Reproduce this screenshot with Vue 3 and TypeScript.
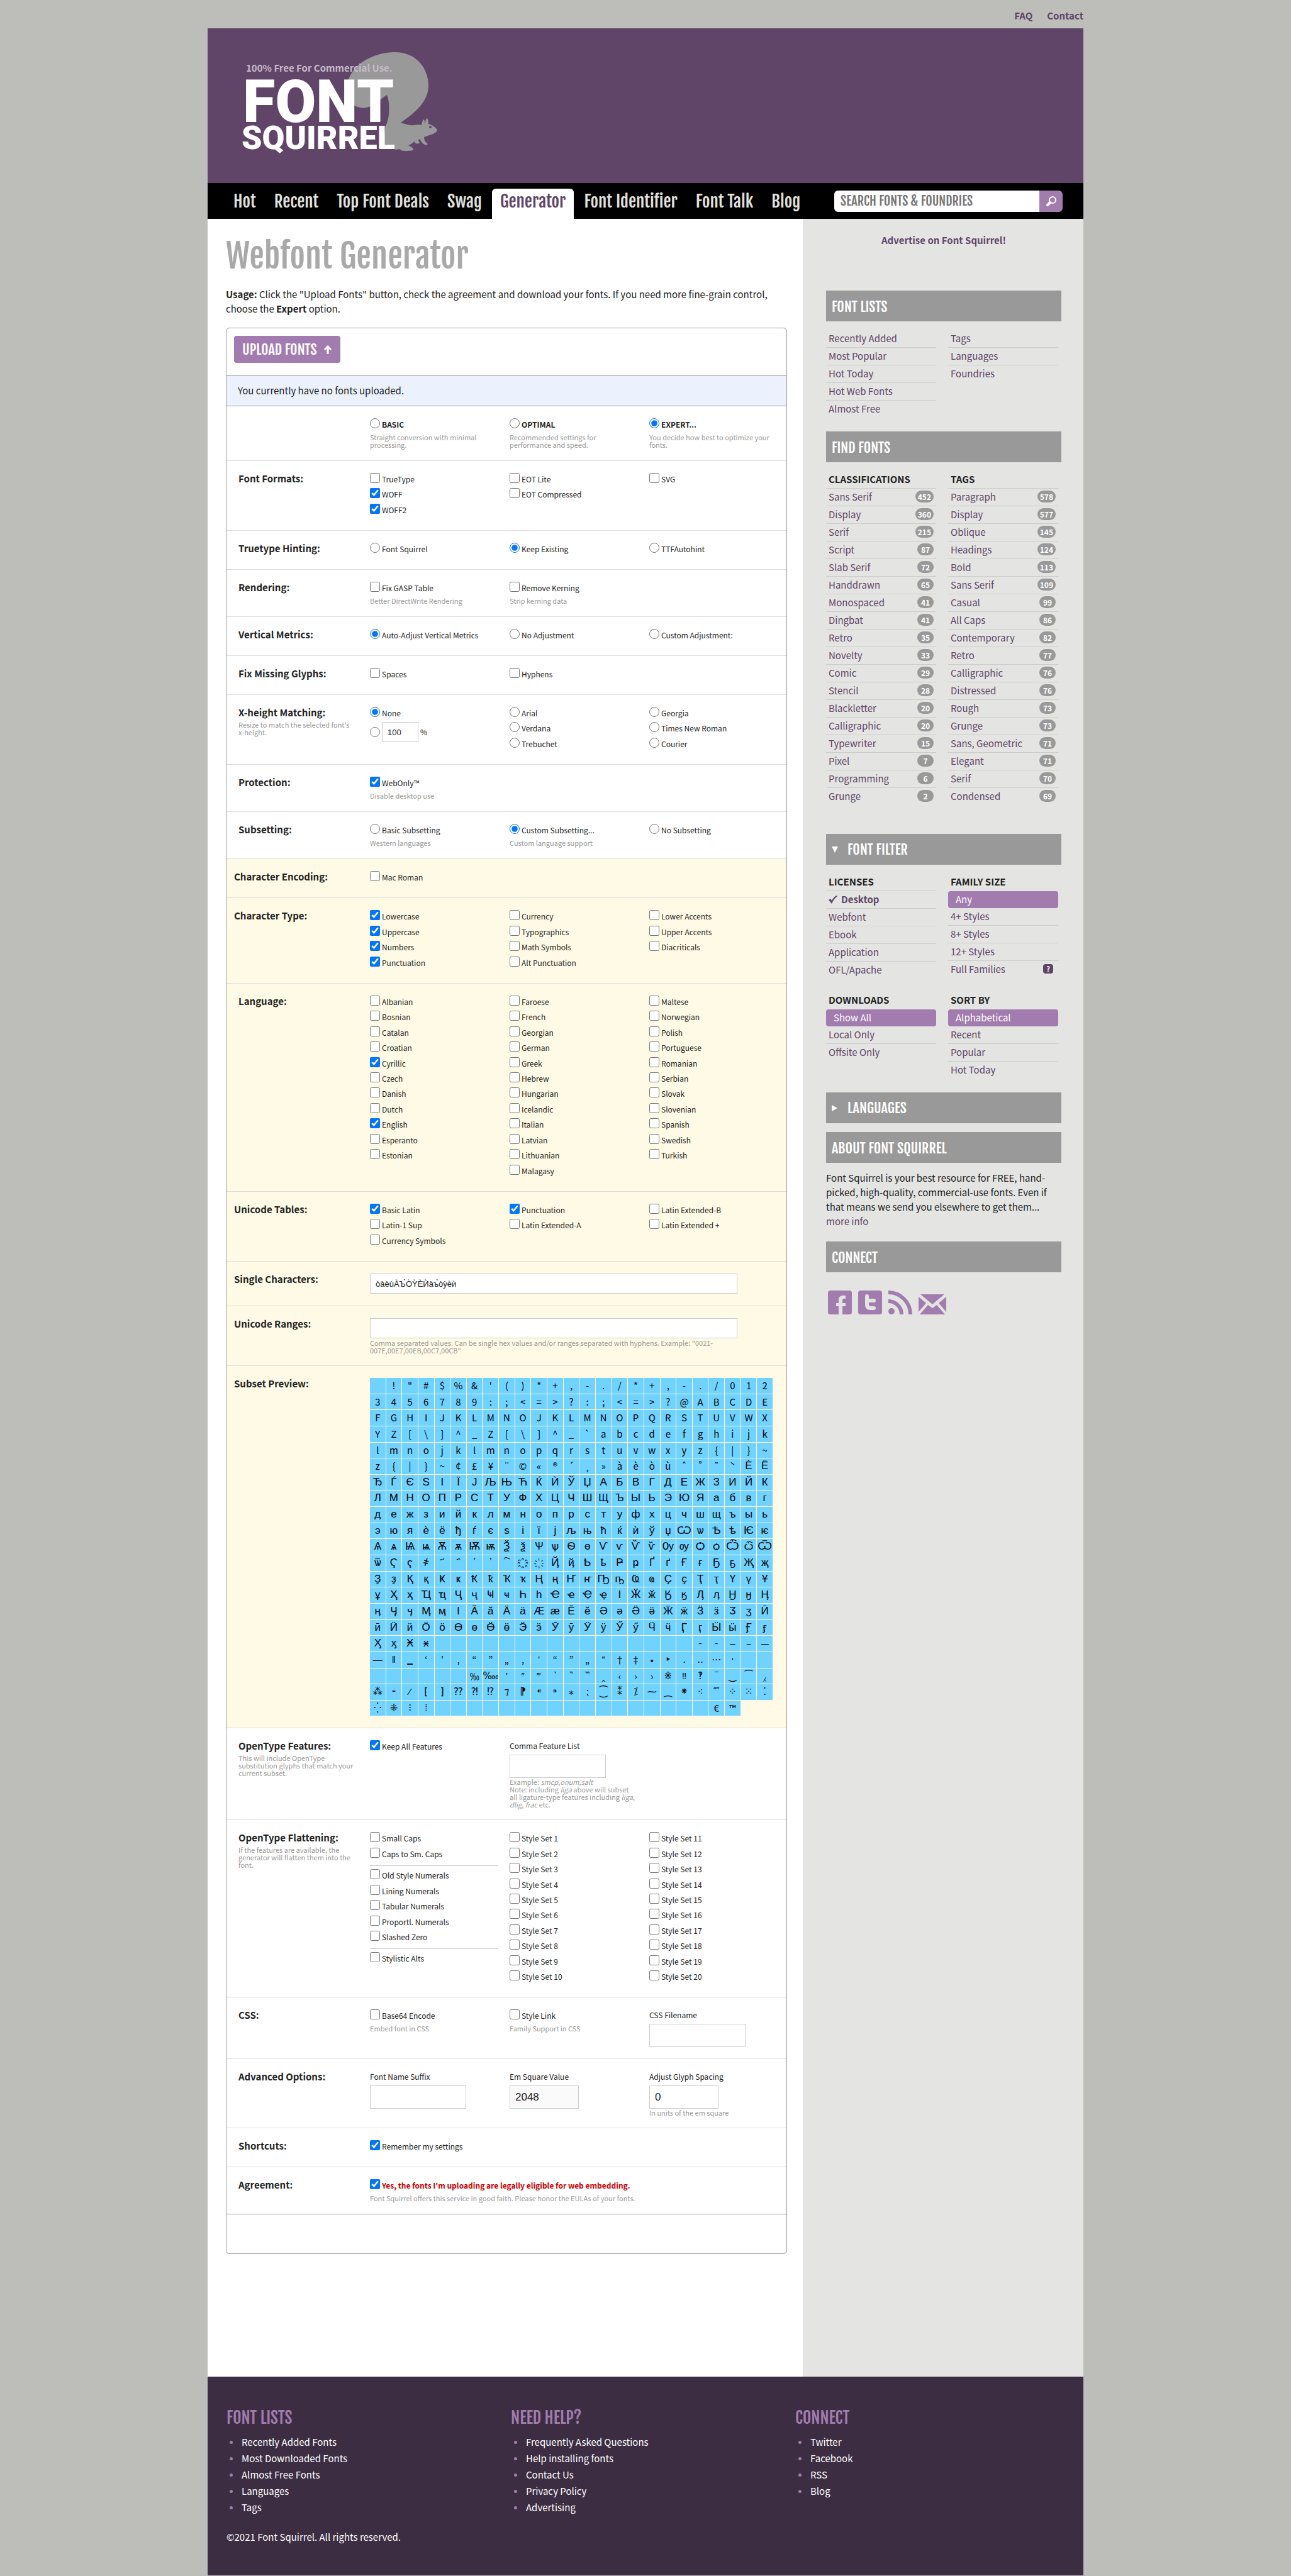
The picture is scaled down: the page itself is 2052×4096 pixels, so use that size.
<script setup lang="ts">
interface Option {
  label: string
  kind?: 'radio' | 'checkbox'
  checked?: boolean
  hint?: string
}
interface Section {
  title?: string
  group?: string
  subset?: boolean
  indent?: boolean
  columns: Option[][]
}

const ROW_PITCH = 24.43

const radio = (label: string, checked = false, hint?: string): Option => ({ label, kind: 'radio', checked, hint })
const box = (label: string, checked = false, hint?: string): Option => ({ label, kind: 'checkbox', checked, hint })
const boxes = (labels: string, checked: string[] = []): Option[] =>
  labels.split(',').map((l) => box(l, checked.includes(l)))

const modes: Option[] = [
  radio('BASIC', false, 'Straight conversion with minimal processing.'),
  radio('OPTIMAL', false, 'Recommended settings for performance and speed.'),
  radio('EXPERT...', true, 'You decide how best to optimize your fonts.'),
]

const firstSections: Section[] = [
  {
    title: 'Font Formats:',
    columns: [boxes('TrueType,WOFF,WOFF2', ['WOFF', 'WOFF2']), boxes('EOT Lite,EOT Compressed'), boxes('SVG')],
  },
  {
    title: 'Truetype Hinting:',
    group: 'hinting',
    columns: [[radio('Font Squirrel')], [radio('Keep Existing', true)], [radio('TTFAutohint')]],
  },
  {
    title: 'Rendering:',
    columns: [
      [box('Fix GASP Table', false, 'Better DirectWrite Rendering')],
      [box('Remove Kerning', false, 'Strip kerning data')],
      [],
    ],
  },
  {
    title: 'Vertical Metrics:',
    group: 'metrics',
    columns: [[radio('Auto-Adjust Vertical Metrics', true)], [radio('No Adjustment')], [radio('Custom Adjustment:')]],
  },
  { title: 'Fix Missing Glyphs:', columns: [[box('Spaces')], [box('Hyphens')], []] },
]

const secondSections: Section[] = [
  { title: 'Protection:', columns: [[box('WebOnly™', true, 'Disable desktop use')], [], []] },
  {
    title: 'Subsetting:',
    group: 'subsetting',
    columns: [
      [radio('Basic Subsetting', false, 'Western languages')],
      [radio('Custom Subsetting...', true, 'Custom language support')],
      [radio('No Subsetting')],
    ],
  },
  { title: 'Character Encoding:', subset: true, columns: [[box('Mac Roman')], [], []] },
  {
    title: 'Character Type:',
    subset: true,
    columns: [
      boxes('Lowercase,Uppercase,Numbers,Punctuation', ['Lowercase', 'Uppercase', 'Numbers', 'Punctuation']),
      boxes('Currency,Typographics,Math Symbols,Alt Punctuation'),
      boxes('Lower Accents,Upper Accents,Diacriticals'),
    ],
  },
  {
    title: 'Language:',
    subset: true,
    indent: true,
    columns: [
      boxes('Albanian,Bosnian,Catalan,Croatian,Cyrillic,Czech,Danish,Dutch,English,Esperanto,Estonian', [
        'Cyrillic',
        'English',
      ]),
      boxes('Faroese,French,Georgian,German,Greek,Hebrew,Hungarian,Icelandic,Italian,Latvian,Lithuanian,Malagasy'),
      boxes('Maltese,Norwegian,Polish,Portuguese,Romanian,Serbian,Slovak,Slovenian,Spanish,Swedish,Turkish'),
    ],
  },
  {
    title: 'Unicode Tables:',
    subset: true,
    columns: [
      boxes('Basic Latin,Latin-1 Sup,Currency Symbols', ['Basic Latin']),
      boxes('Punctuation,Latin Extended-A', ['Punctuation']),
      boxes('Latin Extended-B,Latin Extended +'),
    ],
  },
]

const flattenA = boxes('Small Caps,Caps to Sm. Caps')
const flattenB = boxes('Old Style Numerals,Lining Numerals,Tabular Numerals,Proportl. Numerals,Slashed Zero')
const flattenC = boxes('Stylistic Alts')
const styleSets: Option[][] = [0, 10].map((start) =>
  Array.from({ length: 10 }, (_, i) => box(`Style Set ${start + i + 1}`)),
)

function gridStyle(rows: number) {
  return { gridTemplateRows: `repeat(${rows}, 1fr)`, height: `${Math.round(rows * ROW_PITCH)}px` }
}
function hasHint(column: Option[]): boolean {
  return column.some((o) => o.hint)
}
function rowsOf(s: Section): number {
  return Math.max(...s.columns.map((c) => c.length))
}

const range = (from: number, to: number): string[] =>
  Array.from({ length: to - from + 1 }, (_, i) => String.fromCodePoint(from + i))
const blanks = (n: number): string[] => Array.from({ length: n }, () => '')

const glyphs: string[] = [
  '',
  ...'!"#$%&\'()*+,-./*+,-./012',
  ...'3456789:;<=>?:;<=>?@ABCDE',
  ...'FGHIJKLMNOJKLMNOPQRSTUVWX',
  ...'YZ[\\]^_Z[\\]^_`abcdefghijk',
  ...'lmnojklmnopqrstuvwxyz{|}~',
  ...'z{|}~¢£¥¨©«®´¸»àèòùˆ˚˜',
  '\u02CB',
  ...range(0x400, 0x4ff),
  ...blanks(16),
  ...range(0x2010, 0x201a),
  ...range(0x201c, 0x201e),
  ...range(0x201a, 0x2027),
  ...blanks(8),
  ...range(0x2030, 0x203a),
  ...range(0x203a, 0x205e),
  ...blanks(17),
  '€',
  '™',
]
const COMMON_PUNCTUATION = '–—‘’‚“”„†‡•…‰‹›'
function glyphClass(g: string): string {
  const code = g ? g.codePointAt(0)! : 0
  if (code >= 0x400 && code < 0x530) return 'glyph cyrillic'
  if (code >= 0x2010 && code < 0x20a0 && !COMMON_PUNCTUATION.includes(g)) return 'glyph symbol'
  return 'glyph'
}

const nav: string[] = ['Hot', 'Recent', 'Top Font Deals', 'Swag', 'Generator', 'Font Identifier', 'Font Talk', 'Blog']
const listColumns: string[][] = [
  ['Recently Added', 'Most Popular', 'Hot Today', 'Hot Web Fonts', 'Almost Free'],
  ['Tags', 'Languages', 'Foundries'],
]
const classifications: [string, number][] = [
  ['Sans Serif', 452], ['Display', 360], ['Serif', 215], ['Script', 87], ['Slab Serif', 72], ['Handdrawn', 65],
  ['Monospaced', 41], ['Dingbat', 41], ['Retro', 35], ['Novelty', 33], ['Comic', 29], ['Stencil', 28],
  ['Blackletter', 20], ['Calligraphic', 20], ['Typewriter', 15], ['Pixel', 7], ['Programming', 6], ['Grunge', 2],
]
const tags: [string, number][] = [
  ['Paragraph', 578], ['Display', 577], ['Oblique', 145], ['Headings', 124], ['Bold', 113], ['Sans Serif', 109],
  ['Casual', 99], ['All Caps', 86], ['Contemporary', 82], ['Retro', 77], ['Calligraphic', 76], ['Distressed', 76],
  ['Rough', 73], ['Grunge', 73], ['Sans, Geometric', 71], ['Elegant', 71], ['Serif', 70], ['Condensed', 69],
]
const findColumns = [
  { title: 'CLASSIFICATIONS', items: classifications },
  { title: 'TAGS', items: tags },
]
const filters = [
  { title: 'LICENSES', items: ['Desktop', 'Webfont', 'Ebook', 'Application', 'OFL/Apache'], active: '' },
  { title: 'FAMILY SIZE', items: ['Any', '4+ Styles', '8+ Styles', '12+ Styles', 'Full Families'], active: 'Any' },
  { title: 'DOWNLOADS', items: ['Show All', 'Local Only', 'Offsite Only'], active: 'Show All' },
  { title: 'SORT BY', items: ['Alphabetical', 'Recent', 'Popular', 'Hot Today'], active: 'Alphabetical' },
]
const footer = [
  { title: 'FONT LISTS', items: ['Recently Added Fonts', 'Most Downloaded Fonts', 'Almost Free Fonts', 'Languages', 'Tags'] },
  { title: 'NEED HELP?', items: ['Frequently Asked Questions', 'Help installing fonts', 'Contact Us', 'Privacy Policy', 'Advertising'] },
  { title: 'CONNECT', items: ['Twitter', 'Facebook', 'RSS', 'Blog'] },
]
</script>

<template>
  <div class="page">
    <div class="topbar"><a href="#">FAQ</a><a href="#">Contact</a></div>

    <header class="masthead">
      <a href="#" class="logo" aria-label="Font Squirrel">
        <svg width="318" height="170" viewBox="0 0 318 170">
          <path
            fill="#999"
            d="M246 3C281 3 299 30 299 56C299 80 280 98 255 115C262 117 268 120 276 119C281 118 285 118 288 119C289 114 290 110 292 110C293 112 293 115 294 117C294 112 295 108 297 108C299 111 299 115 299 117C306 119 311 123 313 127C312 132 303 134 292 138C292 143 294 146 298 149C297 151 293 151 290 148C287 145 286 142 285 141C282 142 283 144 285 147C282 150 278 148 276 145C274 148 270 150 267 151C270 153 275 154 275 159C267 160 260 161 255 159L254 157C249 158 244 158 241 156L228 156L230 122C237 112 239 86 233 71C231 72 222 79 212 86C205 91 196 93 190 91C176 88 168 76 169 62C170 26 208 3 246 3Z"
          />
          <circle cx="302" cy="122" r="2" fill="#614569" />
          <text x="9" y="34" class="tagline">100% Free For Commercial Use.</text>
          <text x="4" y="114" class="word-font">FONT</text>
          <text x="2" y="157" class="word-squirrel">SQUIRREL</text>
        </svg>
      </a>
    </header>

    <nav class="nav">
      <div class="nav-links">
        <a v-for="item in nav" :key="item" href="#" :class="{ current: item === 'Generator' }">{{ item }}</a>
      </div>
      <form class="search" @submit.prevent>
        <input type="text" aria-label="Search fonts and foundries" placeholder="SEARCH FONTS &amp; FOUNDRIES" />
        <button type="submit" aria-label="Search">
          <svg width="18" height="18" viewBox="0 0 18 18" fill="none" stroke="#fff">
            <circle cx="11" cy="7" r="5" stroke-width="2" />
            <path d="M7 11L3 15" stroke-width="4" stroke-linecap="round" />
          </svg>
        </button>
      </form>
    </nav>

    <div class="body">
      <main class="main">
        <h1>Webfont Generator</h1>
        <p class="usage">
          <b>Usage:</b> Click the "Upload Fonts" button, check the agreement and download your fonts. If you need more
          fine-grain control, choose the <b>Expert</b> option.
        </p>

        <form class="panel" @submit.prevent>
          <div class="upload">
            <button type="button" class="upload-button">
              UPLOAD FONTS
              <svg width="14" height="14" viewBox="0 0 14 14" fill="none" stroke="#fff" stroke-width="3">
                <path d="M7 14V3M2 7L7 2L12 7" />
              </svg>
            </button>
          </div>
          <div class="notice">You currently have no fonts uploaded.</div>

          <section class="row">
            <div class="side"></div>
            <div v-for="m in modes" :key="m.label" class="col">
              <label class="opt strong line"><input type="radio" name="mode" :checked="m.checked" /><span>{{ m.label }}</span></label>
              <p class="hint">{{ m.hint }}</p>
            </div>
          </section>

          <section v-for="s in firstSections" :key="s.title" class="row">
            <div class="side"><h3>{{ s.title }}</h3></div>
            <div v-for="(c, i) in s.columns" :key="i" class="col">
              <div class="opts" :style="gridStyle(rowsOf(s))">
                <label v-for="o in c" :key="o.label" class="opt">
                  <input :type="o.kind" :name="s.group" :checked="o.checked" /><span>{{ o.label }}</span>
                </label>
              </div>
              <p v-if="hasHint(c)" class="hint">{{ c[0].hint }}</p>
            </div>
          </section>

          <section class="row">
            <div class="side">
              <h3>X-height Matching:</h3>
              <p class="hint">Resize to match the selected font's x-height.</p>
            </div>
            <div class="col">
              <label class="opt line"><input type="radio" name="xheight" checked /><span>None</span></label>
              <div class="opt percent">
                <input type="radio" name="xheight" aria-label="Custom percentage" />
                <input type="text" class="field tiny" value="100" aria-label="Percentage" />
                <span>%</span>
              </div>
            </div>
            <div class="col">
              <div class="opts" :style="gridStyle(3)">
                <label v-for="o in ['Arial', 'Verdana', 'Trebuchet']" :key="o" class="opt"><input type="radio" name="xheight" /><span>{{ o }}</span></label>
              </div>
            </div>
            <div class="col">
              <div class="opts" :style="gridStyle(3)">
                <label v-for="o in ['Georgia', 'Times New Roman', 'Courier']" :key="o" class="opt"><input type="radio" name="xheight" /><span>{{ o }}</span></label>
              </div>
            </div>
          </section>

          <section v-for="s in secondSections" :key="s.title" class="row" :class="{ subset: s.subset, indent: s.indent }">
            <div class="side"><h3>{{ s.title }}</h3></div>
            <div v-for="(c, i) in s.columns" :key="i" class="col">
              <div class="opts" :style="gridStyle(rowsOf(s))">
                <label v-for="o in c" :key="o.label" class="opt">
                  <input :type="o.kind" :name="s.group" :checked="o.checked" /><span>{{ o.label }}</span>
                </label>
              </div>
              <p v-if="hasHint(c)" class="hint">{{ c[0].hint }}</p>
            </div>
          </section>

          <section class="row subset">
            <div class="side"><h3><label for="single">Single Characters:</label></h3></div>
            <div class="wide"><input id="single" type="text" class="field long" value="òàèùÀЪ̀ÒỲÈЍàъ̀òỳѐѝ" /></div>
          </section>
          <section class="row subset">
            <div class="side"><h3><label for="ranges">Unicode Ranges:</label></h3></div>
            <div class="wide">
              <input id="ranges" type="text" class="field long" />
              <p class="hint">Comma separated values. Can be single hex values and/or ranges separated with hyphens. Example: "0021-007E,00E7,00EB,00C7,00CB"</p>
            </div>
          </section>
          <section class="row subset">
            <div class="side"><h3>Subset Preview:</h3></div>
            <div class="wide">
              <div class="glyphs">
                <span v-for="(g, i) in glyphs" :key="i" :class="glyphClass(g)">{{ g }}</span>
              </div>
            </div>
          </section>

          <section class="row">
            <div class="side">
              <h3>OpenType Features:</h3>
              <p class="hint">This will include OpenType substitution glyphs that match your current subset.</p>
            </div>
            <div class="col">
              <label class="opt line"><input type="checkbox" checked /><span>Keep All Features</span></label>
            </div>
            <div class="col">
              <label class="caption" for="features">Comma Feature List</label>
              <input id="features" type="text" class="field medium" />
              <p class="hint">
                Example: <i>smcp</i>,<i>onum</i>,<i>salt</i><br />Note: including <i>liga</i> above will subset all
                ligature-type features including <i>liga</i>, <i>dlig</i>, <i>frac</i> etc.
              </p>
            </div>
            <div class="col"></div>
          </section>

          <section class="row">
            <div class="side">
              <h3>OpenType Flattening:</h3>
              <p class="hint">If the features are available, the generator will flatten them into the font.</p>
            </div>
            <div class="col">
              <div class="opts" :style="gridStyle(2)">
                <label v-for="o in flattenA" :key="o.label" class="opt"><input type="checkbox" /><span>{{ o.label }}</span></label>
              </div>
              <hr />
              <div class="opts" :style="gridStyle(5)">
                <label v-for="o in flattenB" :key="o.label" class="opt"><input type="checkbox" /><span>{{ o.label }}</span></label>
              </div>
              <hr />
              <div class="opts" :style="gridStyle(1)">
                <label v-for="o in flattenC" :key="o.label" class="opt"><input type="checkbox" /><span>{{ o.label }}</span></label>
              </div>
            </div>
            <div v-for="(c, i) in styleSets" :key="i" class="col">
              <div class="opts" :style="gridStyle(10)">
                <label v-for="o in c" :key="o.label" class="opt"><input type="checkbox" /><span>{{ o.label }}</span></label>
              </div>
            </div>
          </section>

          <section class="row">
            <div class="side"><h3>CSS:</h3></div>
            <div class="col">
              <label class="opt line"><input type="checkbox" /><span>Base64 Encode</span></label>
              <p class="hint">Embed font in CSS</p>
            </div>
            <div class="col">
              <label class="opt line"><input type="checkbox" /><span>Style Link</span></label>
              <p class="hint">Family Support in CSS</p>
            </div>
            <div class="col">
              <label class="caption" for="filename">CSS Filename</label>
              <input id="filename" type="text" class="field medium" />
            </div>
          </section>

          <section class="row">
            <div class="side"><h3>Advanced Options:</h3></div>
            <div class="col">
              <label class="caption" for="suffix">Font Name Suffix</label>
              <input id="suffix" type="text" class="field medium" />
            </div>
            <div class="col">
              <label class="caption" for="em">Em Square Value</label>
              <input id="em" type="text" class="field short muted" value="2048" />
            </div>
            <div class="col">
              <label class="caption" for="spacing">Adjust Glyph Spacing</label>
              <input id="spacing" type="text" class="field short" value="0" />
              <p class="hint">In units of the em square</p>
            </div>
          </section>

          <section class="row">
            <div class="side"><h3>Shortcuts:</h3></div>
            <div class="wide">
              <label class="opt line"><input type="checkbox" checked /><span>Remember my settings</span></label>
            </div>
          </section>
          <section class="row last">
            <div class="side"><h3>Agreement:</h3></div>
            <div class="wide">
              <label class="opt line agree"><input type="checkbox" checked /><span>Yes, the fonts I'm uploading are legally eligible for web embedding.</span></label>
              <p class="hint">Font Squirrel offers this service in good faith. Please honor the EULAs of your fonts.</p>
            </div>
          </section>
          <div class="panel-end"></div>
        </form>
      </main>

      <aside class="sidebar">
        <a href="#" class="advertise">Advertise on Font Squirrel!</a>

        <h2>FONT LISTS</h2>
        <div class="pair">
          <ul v-for="(c, i) in listColumns" :key="i">
            <li v-for="l in c" :key="l"><a href="#">{{ l }}</a></li>
          </ul>
        </div>

        <h2>FIND FONTS</h2>
        <div class="pair find">
          <ul v-for="c in findColumns" :key="c.title">
            <li class="title">{{ c.title }}</li>
            <li v-for="[name, count] in c.items" :key="name">
              <a href="#">{{ name }}</a><span class="count">{{ count }}</span>
            </li>
          </ul>
        </div>

        <h2 class="toggle">
          <svg width="10" height="10" viewBox="0 0 10 10" fill="#fff"><path d="M0 0H10L5 10Z" /></svg>FONT FILTER
        </h2>
        <div class="pair filters">
          <ul v-for="f in filters" :key="f.title">
            <li class="title" :class="{ bare: f.active }">{{ f.title }}</li>
            <li v-for="name in f.items" :key="name" :class="{ active: name === f.active, picked: name === 'Desktop' }">
              <svg v-if="name === 'Desktop'" width="14" height="14" viewBox="0 0 14 14" fill="#604568">
                <path d="M0 8L3 6L5 9C7 5 10 2 13 1L14 2C10 5 7 9 5 14Z" />
              </svg>
              <a href="#">{{ name }}</a>
              <span v-if="name === 'Full Families'" class="help">?</span>
            </li>
          </ul>
        </div>

        <h2 class="toggle">
          <svg width="10" height="10" viewBox="0 0 10 10" fill="#fff"><path d="M0 0L9 5L0 10Z" /></svg>LANGUAGES
        </h2>
        <h2 class="next">ABOUT FONT SQUIRREL</h2>
        <p class="about">
          Font Squirrel is your best resource for FREE, hand-picked, high-quality, commercial-use fonts. Even if that
          means we send you elsewhere to get them... <a href="#">more info</a>
        </p>
        <h2>CONNECT</h2>
        <div class="social">
          <a href="#" aria-label="Facebook">
            <svg width="38" height="38" viewBox="0 0 38 38">
              <rect width="38" height="38" rx="4" fill="#a27caf" />
              <path fill="#e4e4e2" d="M17 38V25H13V20H17V15C17 10 20 8 24 8H28V13H25C24 13 23 14 23 15V20H28V25H23V38Z" />
            </svg>
          </a>
          <a href="#" aria-label="Twitter">
            <svg width="38" height="38" viewBox="0 0 38 38">
              <rect width="38" height="38" rx="4" fill="#a27caf" />
              <path d="M14 9V22C14 26 16 28 20 28H25M14 16H25" fill="none" stroke="#e4e4e2" stroke-width="6" stroke-linecap="round" />
            </svg>
          </a>
          <a href="#" aria-label="RSS">
            <svg width="38" height="38" viewBox="0 0 38 38">
              <circle cx="5" cy="33" r="5" fill="#a27caf" />
              <path d="M0 17A21 21 0 0 1 21 38M0 3A35 35 0 0 1 35 38" fill="none" stroke="#a27caf" stroke-width="6" />
            </svg>
          </a>
          <a href="#" aria-label="Mail">
            <svg width="44" height="32" viewBox="0 0 44 32" fill="#a27caf">
              <path d="M3 0H41L22 16ZM0 4L12 14L0 28ZM44 4L32 14L44 28ZM2 32L15 17L22 22L29 17L42 32Z" />
            </svg>
          </a>
        </div>
      </aside>
    </div>

    <footer class="footer">
      <div class="footer-columns">
        <div v-for="c in footer" :key="c.title">
          <h4>{{ c.title }}</h4>
          <ul>
            <li v-for="l in c.items" :key="l"><a href="#">{{ l }}</a></li>
          </ul>
        </div>
      </div>
      <p>©2021 Font Squirrel. All rights reserved.</p>
    </footer>
  </div>
</template>

<style>
body {
  margin: 0;
  background: #bdbdba;
}
</style>

<style scoped>
.page {
  --display: 'Fjalla One', 'Roboto Condensed', 'Open Sans Condensed', 'Liberation Sans Narrow', 'DejaVu Sans Condensed', sans-serif;
  --text: 'Noto Sans CJK KR', 'Open Sans', sans-serif;
  max-width: 1392px;
  margin: 0 auto;
  font-family: var(--text);
  font-size: 15px;
  line-height: 23px;
  color: #222;
}
*,
*::before,
*::after {
  box-sizing: border-box;
}
a {
  color: #604568;
  text-decoration: none;
}
h1,
h2,
h3,
h4,
p,
ul {
  margin: 0;
  padding: 0;
}
ul {
  list-style: none;
}
.topbar {
  display: flex;
  justify-content: flex-end;
  gap: 23px;
  height: 45px;
  padding-top: 13px;
  font-weight: 700;
}
.masthead {
  height: 246px;
  padding: 35px 52px;
  background: #614569;
}
.logo svg {
  display: block;
}
.tagline {
  font: 700 15px 'Noto Sans CJK KR', sans-serif;
  fill: #c6bac9;
}
.word-font {
  font: 900 94px Roboto, sans-serif;
  fill: #fff;
}
.word-squirrel {
  font: 900 52px Roboto, sans-serif;
  fill: #fff;
}
.nav {
  display: flex;
  justify-content: space-between;
  height: 57px;
  padding: 0 33px 0 28px;
  background: #000;
}
.nav-links {
  display: flex;
  align-items: flex-end;
  gap: 3px;
}
.nav-links a {
  height: 48px;
  padding: 0 13px;
  border-radius: 6px 6px 0 0;
  font: 400 27px/40px var(--display);
  color: #e0e0de;
  white-space: nowrap;
}
.nav-links .current {
  background: #fff;
  color: #604568;
}
.search {
  display: flex;
  align-self: center;
  width: 363px;
  height: 34px;
  border-radius: 6px;
  overflow: hidden;
}
.search input {
  flex: 1;
  min-width: 0;
  padding: 0 10px;
  border: 0;
  background: #fff;
  font: 400 20px/34px var(--display);
}
.search input::placeholder {
  color: #757575;
}
.search button {
  display: flex;
  align-items: center;
  justify-content: center;
  width: 37px;
  padding: 0;
  border: 0;
  background: #a27caf;
}
.body {
  display: flex;
  background: #fff;
}
.main {
  flex: 1;
  min-width: 0;
  padding: 26px 25px 195px 29px;
}
h1 {
  font: 400 53px/66px var(--display);
  color: #a9a9a9;
}
.usage {
  margin-top: 16px;
}
.panel {
  margin-top: 19px;
  border: 1px solid #999;
  border-radius: 6px;
}
.upload {
  padding: 12px 12px 20px;
}
.upload-button {
  display: flex;
  align-items: center;
  justify-content: space-between;
  width: 169px;
  height: 43px;
  padding: 0 13px;
  border: 0;
  border-radius: 4px;
  background: #a27caf;
  font: 400 22px/43px var(--display);
  color: #fff;
  white-space: nowrap;
}
.notice {
  padding: 11px 18px 13px;
  border: solid #999;
  border-width: 1px 0;
  background: #ebf2fe;
}
.row {
  display: flex;
  padding: 19px 0 18px 19px;
  border-bottom: 1px solid #ddd;
}
.row.last {
  border-bottom-color: #999;
}
.subset {
  padding-left: 12px;
  background: #fffae5;
}
.subset.indent {
  padding-left: 19px;
}
.panel-end {
  height: 62px;
}
.side {
  flex: none;
  width: 209px;
  padding-right: 24px;
}
.subset .side {
  width: 216px;
}
.indent .side {
  width: 209px;
}
.side h3 {
  margin-bottom: 4px;
  font-size: 15px;
  line-height: 18px;
}
.col {
  flex: none;
  width: 222px;
  padding-right: 18px;
}
.wide {
  width: 640px;
}
.opts {
  display: grid;
}
.opt {
  display: flex;
  align-items: flex-start;
  gap: 3px;
  font-size: 12px;
  line-height: 20px;
}
.line {
  height: 24px;
}
.opt input[type='radio'],
.opt input[type='checkbox'] {
  flex: none;
  width: 16px;
  height: 16px;
  margin: 0;
}
.strong {
  font-weight: 700;
}
.agree {
  font-weight: 700;
  color: #c00;
}
.percent {
  align-items: center;
}
.hint {
  margin-bottom: 1px;
  font-size: 11px;
  line-height: 12px;
  color: #999;
}
.side .hint,
.field + .hint {
  margin-bottom: 0;
}
.caption {
  display: block;
  margin-bottom: 5px;
  font-size: 12px;
  line-height: 18px;
}
.field {
  display: block;
  height: 37px;
  padding: 0 8px;
  border: 1px solid #ccc;
  border-radius: 0;
  background: #fff;
  font: 17px 'Liberation Sans', 'DejaVu Sans', sans-serif;
  color: #222;
}
.medium {
  width: 153px;
}
.short {
  width: 110px;
}
.muted {
  background: #fafafa;
}
.tiny {
  width: 58px;
  height: 32px;
  font-size: 13px;
}
.long {
  width: 584px;
  height: 32px;
  margin-bottom: 1px;
  font-size: 13px;
}
.long + .hint {
  width: 584px;
}
.glyphs {
  display: grid;
  grid-template-columns: repeat(25, 1fr);
  gap: 1px;
  margin-bottom: 1px;
}
.glyph {
  aspect-ratio: 1;
  min-width: 0;
  overflow: hidden;
  background: #6fd2ff;
  font-family: 'Noto Sans CJK KR', 'DejaVu Sans', sans-serif;
  font-size: 15px;
  line-height: 24px;
  text-align: center;
  color: #000;
}
.cyrillic {
  font-family: 'Liberation Sans', 'DejaVu Sans', sans-serif;
  font-size: 17px;
}
.symbol {
  font-family: 'Liberation Sans', 'DejaVu Sans', sans-serif;
}
hr {
  width: 100%;
  margin: 4px 0 5px;
  border: 0;
  border-top: 1px solid #ccc;
}
.sidebar {
  flex: none;
  width: 446px;
  padding: 0 35px 0 37px;
  background: #e4e4e2;
}
.advertise {
  display: block;
  padding: 22px 0 69px;
  font-weight: 700;
  text-align: center;
}
h2 {
  height: 49px;
  margin-bottom: 14px;
  padding: 0 9px;
  background: #999;
  font: 400 22px/52px var(--display);
  color: #fff;
}
.toggle {
  display: flex;
  align-items: center;
  gap: 15px;
}
.next {
  margin-bottom: 12px;
}
.pair {
  display: grid;
  grid-template-columns: 1fr 1fr;
  column-gap: 19px;
  margin-bottom: 21px;
  padding-right: 5px;
}
.find {
  margin-bottom: 45px;
}
.filters {
  row-gap: 20px;
}
.pair li {
  display: flex;
  align-items: center;
  height: 28px;
  padding: 0 4px 2px;
  border-bottom: 1px solid #ccc;
  line-height: 25px;
}
.pair li:last-child {
  border-bottom-color: transparent;
}
.pair .title {
  font-weight: 700;
}
.pair .bare {
  border-bottom-color: transparent;
}
.pair .active {
  height: 27px;
  padding-left: 12px;
  border: 0;
  border-radius: 4px;
  background: #a27caf;
}
.active a {
  color: #fff;
}
.picked {
  gap: 6px;
  font-weight: 700;
}
.count {
  min-width: 26px;
  margin-left: auto;
  padding: 0 4px;
  border-radius: 10px;
  background: #999;
  font-size: 12px;
  font-weight: 700;
  line-height: 19px;
  text-align: center;
  color: #fff;
}
.help {
  width: 16px;
  margin: 0 4px 0 auto;
  border-radius: 4px;
  background: #604568;
  font-size: 11px;
  font-weight: 700;
  line-height: 15px;
  text-align: center;
  color: #fff;
}
.about {
  margin-bottom: 21px;
}
.social {
  display: flex;
  align-items: flex-end;
  gap: 10px;
  padding: 15px 3px 0;
}
.social svg {
  display: block;
}
.footer {
  height: 316px;
  padding: 46px 30px 0;
  background: #3c2d42;
  color: #fff;
}
.footer-columns {
  display: grid;
  grid-template-columns: 452px 452px 1fr;
  min-height: 192px;
}
.footer h4 {
  margin-bottom: 7px;
  font: 400 26px/38px var(--display);
  color: #a27caf;
}
.footer li {
  display: flex;
  align-items: center;
  gap: 14px;
  padding-left: 5px;
  line-height: 26px;
}
.footer li::before {
  content: '';
  width: 5px;
  height: 5px;
  border-radius: 50%;
  background: #a27caf;
}
.footer a {
  color: #fff;
}
.footer p {
  margin-top: 5px;
}
</style>
